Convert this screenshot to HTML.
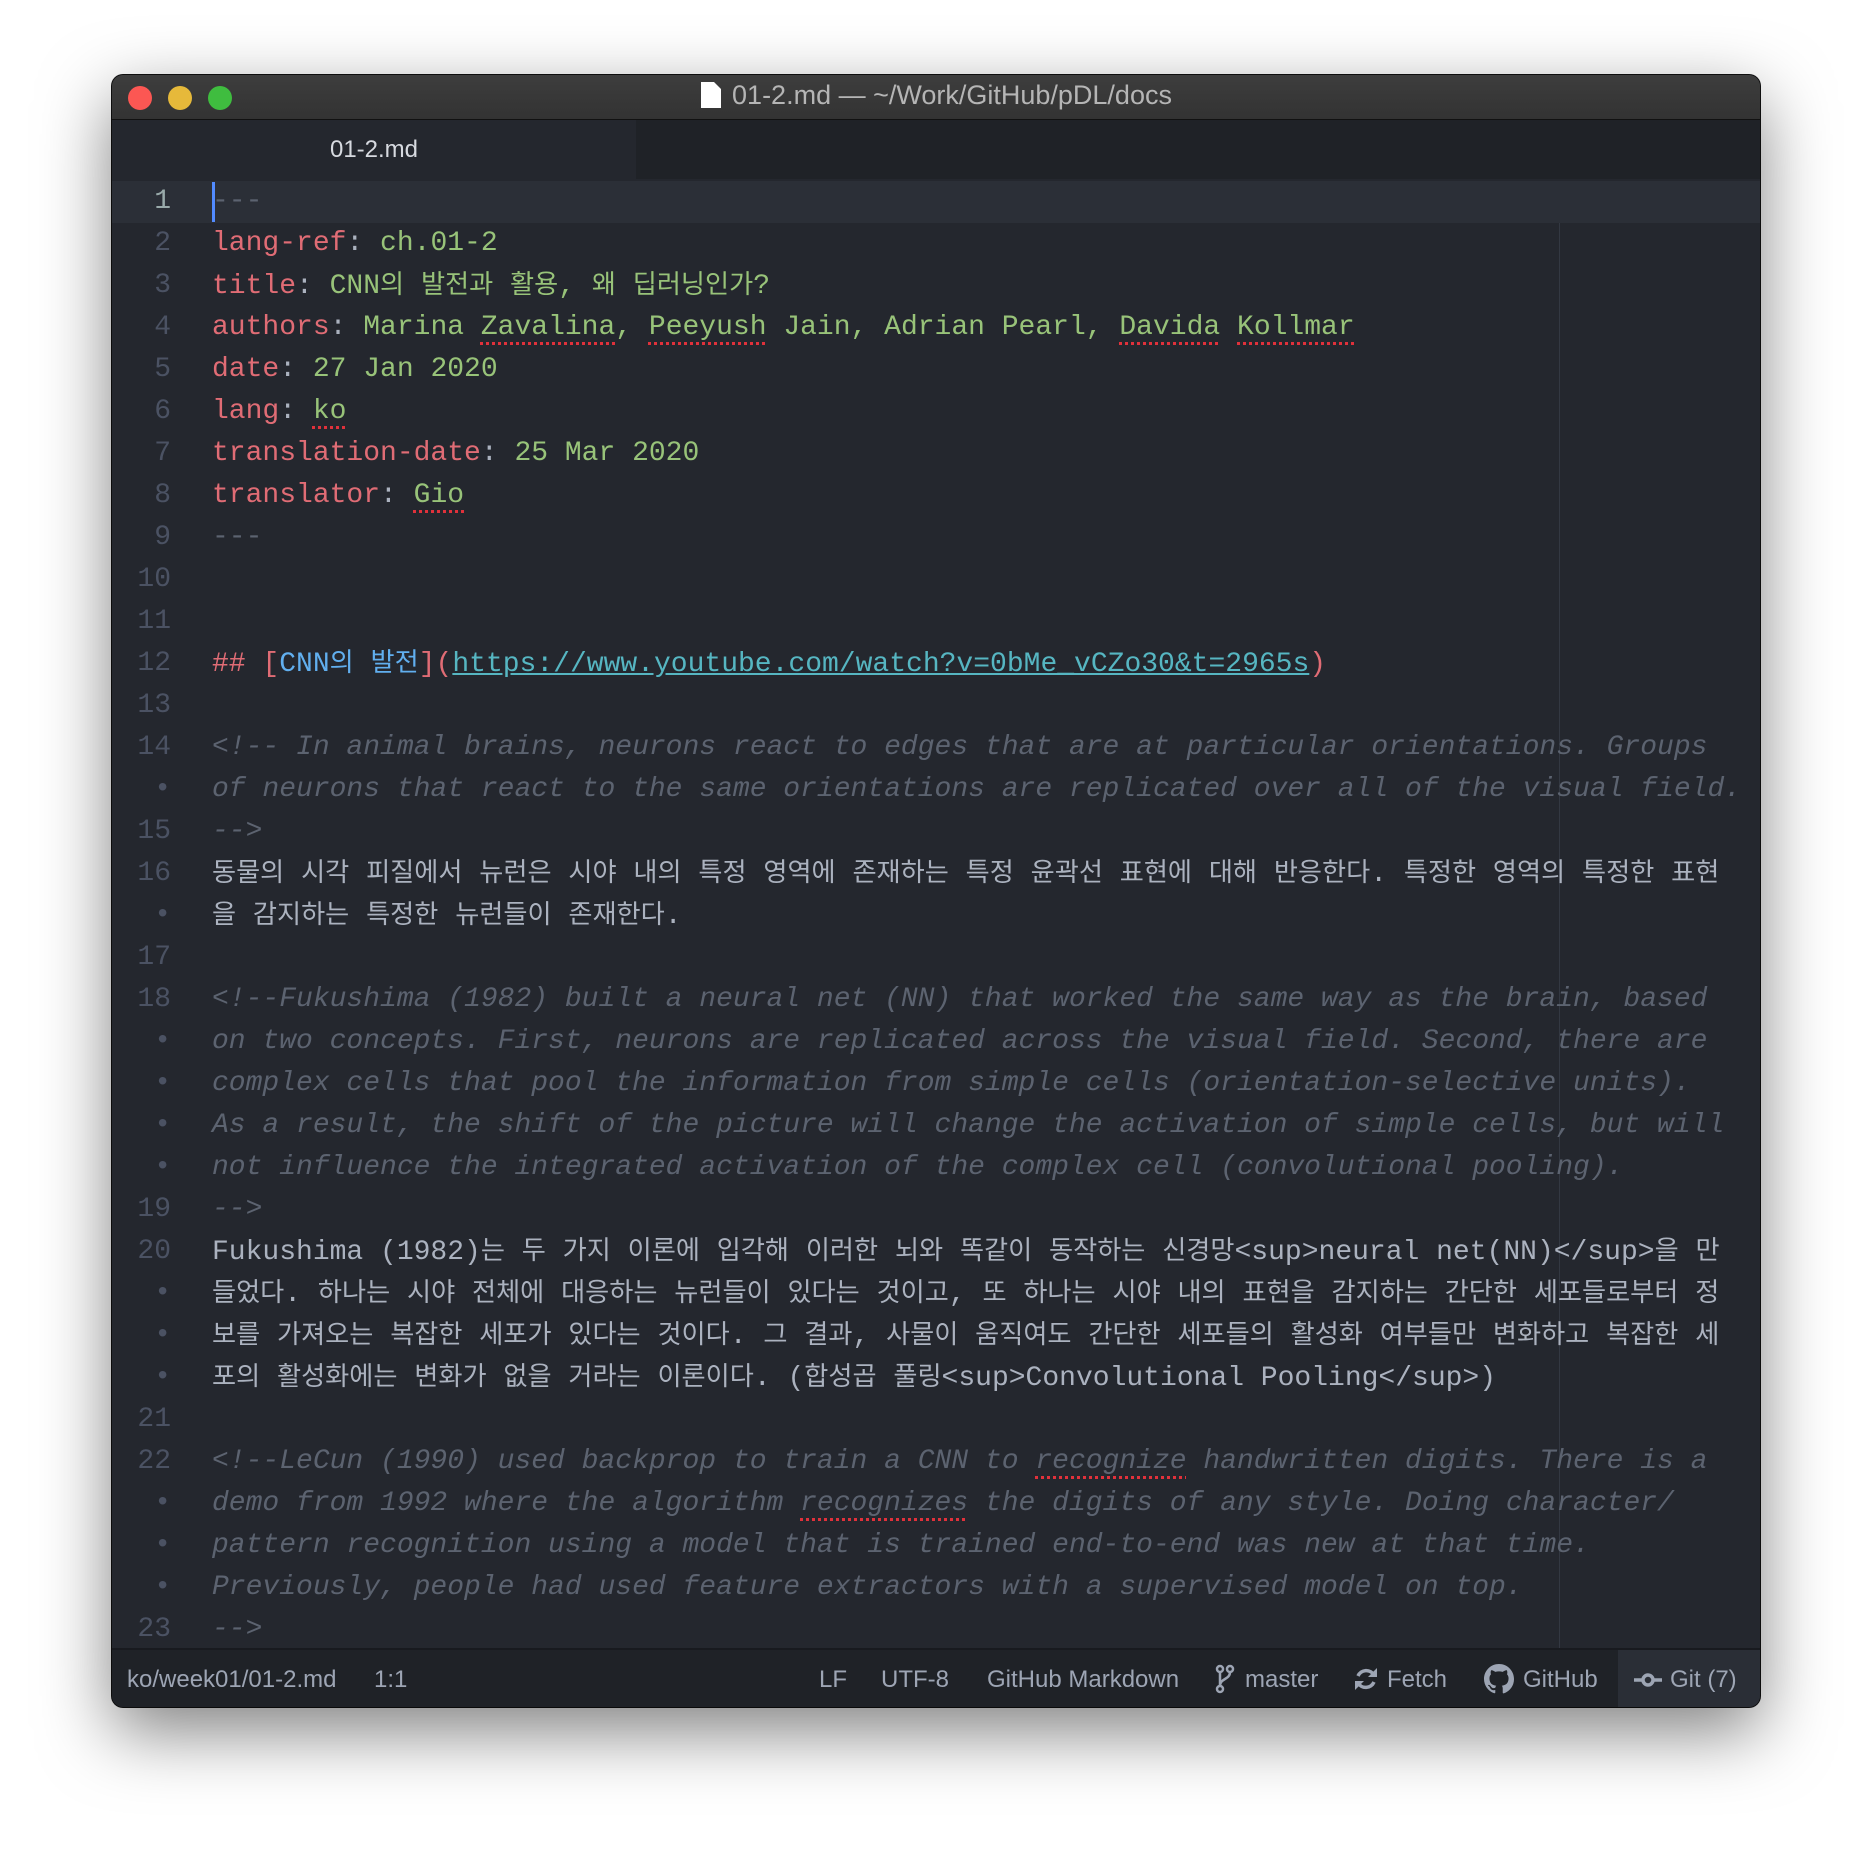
<!DOCTYPE html>
<html><head><meta charset="utf-8"><style>
html,body{margin:0;padding:0;background:#fff;width:1872px;height:1856px;overflow:hidden}
.win{position:absolute;left:112px;top:75px;width:1648px;height:1632px;border-radius:11px;background:#24272e;box-shadow:0 24px 70px rgba(0,0,0,.5),0 0 0 1px #111;overflow:hidden}
.tb{position:absolute;left:0;top:0;width:100%;height:44px;background:linear-gradient(#3d3d3d,#333);border-bottom:1px solid #111}
.dot{position:absolute;top:11px;width:24px;height:24px;border-radius:50%}
.title{position:absolute;left:0;right:0;top:5px;height:44px;line-height:44px;text-align:center;font:27px "Liberation Sans",sans-serif;color:#b5b5b5}
.tabs{position:absolute;left:0;top:45px;width:100%;height:59px;background:#1f2227}
.tab{position:absolute;left:0;top:0;width:524px;height:59px;background:#24272e;color:#d7dae0;font:24px "Liberation Sans",sans-serif;text-align:center;line-height:59px}
.ed{position:absolute;left:0;top:106px;width:100%;height:1467px;background:#24272e}
.row{position:absolute;left:0;height:42px;width:100%;font:28px/42px "Liberation Mono","Noto Sans CJK KR",monospace;white-space:pre;color:#abb2bf}
.n{position:absolute;left:0;width:59px;text-align:right;color:#4b5263}
.t{position:absolute;left:100px}
k{font-size:26.2px}
.r{color:#e06c75}.g{color:#98c379}.c{color:#5c6370;font-style:italic}.b{color:#61afef}.cy{color:#56b6c2;text-decoration:underline}
.sp{text-decoration:underline dotted #e0313b;text-decoration-thickness:3px;text-underline-offset:8px}
.guide{position:absolute;left:1447px;top:0;width:1px;height:1469px;background:#333842}
.sb{position:absolute;left:0;top:1573px;width:100%;height:59px;background:#1f2227;border-top:2px solid #181a1f;font:24px/59px "Liberation Sans",sans-serif;color:#9da5b4}
.sb span{position:absolute;top:0}
</style></head><body>
<div class="win">
<div class="tb">
<div class="dot" style="left:16px;background:#fc5753"></div>
<div class="dot" style="left:56px;background:#e6b93a"></div>
<div class="dot" style="left:96px;background:#3fbd3f"></div>
<div class="title"><svg width="22" height="28" viewBox="0 0 22 28" style="vertical-align:-5px;margin-right:10px"><path d="M1 1h13l7 7v19H1z" fill="#fff"/></svg>01-2.md — ~/Work/GitHub/pDL/docs</div>
</div>
<div class="tabs"><div class="tab">01-2.md</div></div>
<div class="ed">
<div class="guide"></div>
<div class="row" style="top:0;background:#2b2f37"><span class="n" style="color:#9aa">1</span><span class="t c" style="font-style:normal">---</span><div style="position:absolute;left:100px;top:1px;width:3px;height:40px;background:#528bff"></div></div>
<div class="row" style="top:42px"><span class="n">2</span><span class="t"><span class="r">lang-ref</span>: <span class="g">ch.01-2</span></span></div>
<div class="row" style="top:84px"><span class="n">3</span><span class="t"><span class="r">title</span>: <span class="g">CNN<k>의</k> <k>발전과</k> <k>활용</k>, <k>왜</k> <k>딥러닝인가</k>?</span></span></div>
<div class="row" style="top:126px"><span class="n">4</span><span class="t"><span class="r">authors</span>: <span class="g">Marina <span class="sp">Zavalina</span>, <span class="sp">Peeyush</span> Jain, Adrian Pearl, <span class="sp">Davida</span> <span class="sp">Kollmar</span></span></span></div>
<div class="row" style="top:168px"><span class="n">5</span><span class="t"><span class="r">date</span>: <span class="g">27 Jan 2020</span></span></div>
<div class="row" style="top:210px"><span class="n">6</span><span class="t"><span class="r">lang</span>: <span class="g sp">ko</span></span></div>
<div class="row" style="top:252px"><span class="n">7</span><span class="t"><span class="r">translation-date</span>: <span class="g">25 Mar 2020</span></span></div>
<div class="row" style="top:294px"><span class="n">8</span><span class="t"><span class="r">translator</span>: <span class="g sp">Gio</span></span></div>
<div class="row" style="top:336px"><span class="n">9</span><span class="t c" style="font-style:normal">---</span></div>
<div class="row" style="top:378px"><span class="n">10</span></div>
<div class="row" style="top:420px"><span class="n">11</span></div>
<div class="row" style="top:462px"><span class="n">12</span><span class="t"><span class="r">## [</span><span class="b">CNN<k>의</k> <k>발전</k></span><span class="r">](</span><span class="cy">https://www.youtube.com/watch?v=0bMe_vCZo30&amp;t=2965s</span><span class="r">)</span></span></div>
<div class="row" style="top:504px"><span class="n">13</span></div>
<div class="row" style="top:546px"><span class="n">14</span><span class="t c">&lt;!-- In animal brains, neurons react to edges that are at particular orientations. Groups</span></div>
<div class="row" style="top:588px"><span class="n">•</span><span class="t c">of neurons that react to the same orientations are replicated over all of the visual field.</span></div>
<div class="row" style="top:630px"><span class="n">15</span><span class="t c">--&gt;</span></div>
<div class="row" style="top:672px"><span class="n">16</span><span class="t"><k>동물의</k> <k>시각</k> <k>피질에서</k> <k>뉴런은</k> <k>시야</k> <k>내의</k> <k>특정</k> <k>영역에</k> <k>존재하는</k> <k>특정</k> <k>윤곽선</k> <k>표현에</k> <k>대해</k> <k>반응한다</k>. <k>특정한</k> <k>영역의</k> <k>특정한</k> <k>표현</k></span></div>
<div class="row" style="top:714px"><span class="n">•</span><span class="t"><k>을</k> <k>감지하는</k> <k>특정한</k> <k>뉴런들이</k> <k>존재한다</k>.</span></div>
<div class="row" style="top:756px"><span class="n">17</span></div>
<div class="row" style="top:798px"><span class="n">18</span><span class="t c">&lt;!--Fukushima (1982) built a neural net (NN) that worked the same way as the brain, based</span></div>
<div class="row" style="top:840px"><span class="n">•</span><span class="t c">on two concepts. First, neurons are replicated across the visual field. Second, there are</span></div>
<div class="row" style="top:882px"><span class="n">•</span><span class="t c">complex cells that pool the information from simple cells (orientation-selective units).</span></div>
<div class="row" style="top:924px"><span class="n">•</span><span class="t c">As a result, the shift of the picture will change the activation of simple cells, but will</span></div>
<div class="row" style="top:966px"><span class="n">•</span><span class="t c">not influence the integrated activation of the complex cell (convolutional pooling).</span></div>
<div class="row" style="top:1008px"><span class="n">19</span><span class="t c">--&gt;</span></div>
<div class="row" style="top:1050px"><span class="n">20</span><span class="t">Fukushima (1982)<k>는</k> <k>두</k> <k>가지</k> <k>이론에</k> <k>입각해</k> <k>이러한</k> <k>뇌와</k> <k>똑같이</k> <k>동작하는</k> <k>신경망</k>&lt;sup&gt;neural net(NN)&lt;/sup&gt;<k>을</k> <k>만</k></span></div>
<div class="row" style="top:1092px"><span class="n">•</span><span class="t"><k>들었다</k>. <k>하나는</k> <k>시야</k> <k>전체에</k> <k>대응하는</k> <k>뉴런들이</k> <k>있다는</k> <k>것이고</k>, <k>또</k> <k>하나는</k> <k>시야</k> <k>내의</k> <k>표현을</k> <k>감지하는</k> <k>간단한</k> <k>세포들로부터</k> <k>정</k></span></div>
<div class="row" style="top:1134px"><span class="n">•</span><span class="t"><k>보를</k> <k>가져오는</k> <k>복잡한</k> <k>세포가</k> <k>있다는</k> <k>것이다</k>. <k>그</k> <k>결과</k>, <k>사물이</k> <k>움직여도</k> <k>간단한</k> <k>세포들의</k> <k>활성화</k> <k>여부들만</k> <k>변화하고</k> <k>복잡한</k> <k>세</k></span></div>
<div class="row" style="top:1176px"><span class="n">•</span><span class="t"><k>포의</k> <k>활성화에는</k> <k>변화가</k> <k>없을</k> <k>거라는</k> <k>이론이다</k>. (<k>합성곱</k> <k>풀링</k>&lt;sup&gt;Convolutional Pooling&lt;/sup&gt;)</span></div>
<div class="row" style="top:1218px"><span class="n">21</span></div>
<div class="row" style="top:1260px"><span class="n">22</span><span class="t c">&lt;!--LeCun (1990) used backprop to train a CNN to <span class="sp">recognize</span> handwritten digits. There is a</span></div>
<div class="row" style="top:1302px"><span class="n">•</span><span class="t c">demo from 1992 where the algorithm <span class="sp">recognizes</span> the digits of any style. Doing character/</span></div>
<div class="row" style="top:1344px"><span class="n">•</span><span class="t c">pattern recognition using a model that is trained end-to-end was new at that time.</span></div>
<div class="row" style="top:1386px"><span class="n">•</span><span class="t c">Previously, people had used feature extractors with a supervised model on top.</span></div>
<div class="row" style="top:1428px"><span class="n">23</span><span class="t c">--&gt;</span></div>
</div>
<div class="sb">
<span style="left:15px">ko/week01/01-2.md</span>
<span style="left:262px">1:1</span>
<span style="left:707px">LF</span>
<span style="left:769px">UTF-8</span>
<span style="left:875px">GitHub Markdown</span>
<span style="left:1103px"><svg width="20" height="30" viewBox="0 0 20 30" style="vertical-align:-7px"><g fill="none" stroke="#9da5b4" stroke-width="2.5"><circle cx="5" cy="5" r="3"/><circle cx="15" cy="5" r="3"/><circle cx="5" cy="25" r="3"/><path d="M5 8v14M15 8c0 8-10 6-10 14"/></g></svg></span>
<span style="left:1133px">master</span>
<span style="left:1241px"><svg width="26" height="26" viewBox="0 0 26 26" style="vertical-align:-5px"><g fill="none" stroke="#9da5b4" stroke-width="3.5"><path d="M21 9A9 9 0 0 0 5 10M5 17a9 9 0 0 0 16 -1"/></g><path d="M24 2v9h-9z M2 24v-9h9z" fill="#9da5b4"/></svg></span>
<span style="left:1275px">Fetch</span>
<span style="left:1372px"><svg width="30" height="30" viewBox="0 0 16 16" style="vertical-align:-7px"><path fill="#9da5b4" d="M8 0C3.58 0 0 3.58 0 8c0 3.54 2.29 6.53 5.47 7.59.4.07.55-.17.55-.38v-1.33c-2.23.48-2.7-1.07-2.7-1.07-.36-.93-.89-1.17-.89-1.17-.73-.5.05-.49.05-.49.8.06 1.23.83 1.23.83.71 1.23 1.87.87 2.33.67.07-.52.28-.87.5-1.07-1.78-.2-3.64-.89-3.64-3.95 0-.87.31-1.59.82-2.15-.08-.2-.36-1.02.08-2.12 0 0 .67-.21 2.2.82a7.6 7.6 0 0 1 4 0c1.53-1.04 2.2-.82 2.2-.82.44 1.1.16 1.92.08 2.12.51.56.82 1.27.82 2.15 0 3.07-1.87 3.75-3.65 3.95.29.25.54.73.54 1.48v2.2c0 .21.15.46.55.38A8 8 0 0 0 16 8c0-4.42-3.58-8-8-8z"/></svg></span>
<span style="left:1411px">GitHub</span>
<span style="left:1506px;width:142px;height:59px;background:#2a2e36"></span>
<span style="left:1522px"><svg width="28" height="20" viewBox="0 0 28 20" style="vertical-align:-3px"><circle cx="14" cy="10" r="5" fill="none" stroke="#9da5b4" stroke-width="3.5"/><path d="M0 10h8M20 10h8" stroke="#9da5b4" stroke-width="3.5"/></svg></span>
<span style="left:1558px">Git (7)</span>
</div>
</div>
</body></html>
